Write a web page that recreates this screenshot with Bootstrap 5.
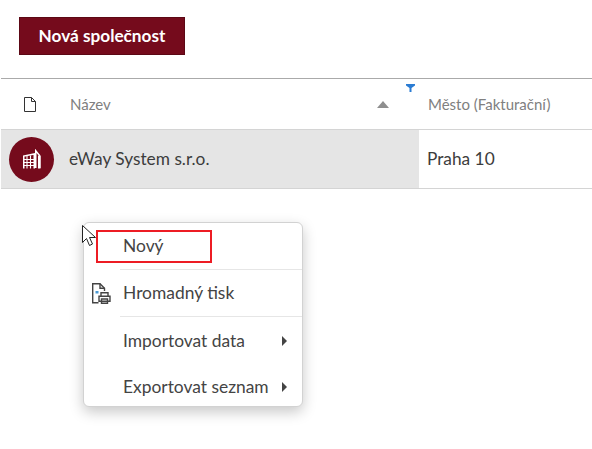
<!DOCTYPE html>
<html lang="cs">
<head>
    <meta charset="UTF-8" />
    <title>Společnosti</title>
    <link href="https://cdn.jsdelivr.net/npm/bootstrap@5.3.6/dist/css/bootstrap.min.css" rel="stylesheet" crossorigin="anonymous" />
    <style>
        body { font-family: "Lato", "Open Sans", sans-serif; background: #fff; color: #333; overflow: hidden; }
        .stranka { position: relative; width: 592px; height: 449px; }
        .horni-lista { padding: 17px 0 23px 19px; }
        .btn-nova { width: 166px; height: 38px; padding: 0; background: #750b1c; border: 1px solid #5c0815; border-radius: 0; color: #fff; font-size: 17.2px; font-weight: 700; }
        .seznam { margin-left: 1px; }
        .hlavicka { height: 52px; border-top: 1px solid #aaa; border-bottom: 1px solid #d4d4d4; color: #808080; font-size: 15px; }
        .bunka-ikona { width: 48px; }
        .hlavicka .bunka-ikona { padding-left: 10px; }
        .bunka-nazev { width: 370px; padding-left: 21px; }
        .bunka-mesto { padding-left: 9px; }
        .radek { height: 59px; border-bottom: 1px solid #d4d4d4; font-size: 17.3px; color: #3c3c3c; }
        .radek .vybrano { background: #e5e5e5; height: 100%; }
        .radek .bunka-nazev { padding-left: 20px; }
        .radek .bunka-mesto { padding-left: 8px; }
        .avatar { width: 45px; height: 45px; margin-left: 8px; background: #750b1c; border-radius: 50%; }
        .sipka-razeni { width: 0; height: 0; margin-right: 30px; border: 6px solid transparent; border-top: 0; border-bottom: 7px solid #8f8f8f; }
        .filtr { position: absolute; left: 406px; top: 84px; }
        .menu-kontext { position: absolute; left: 83px; top: 222px; width: 220px; height: 185px; background: #fff; border: 1px solid #d2d2d2; border-radius: 6px; box-shadow: 0 5px 14px rgba(0,0,0,.22); font-size: 17.4px; color: #444; }
        .polozka { height: 47px; padding-left: 39px; }
        .polozka-oddel { border-bottom: 1px solid #e6e6e6; margin-left: 36px; padding-left: 3px; }
        .polozka-import { height: 48px; }
        .polozka-export { height: 44px; }
        .ikona-tisk { position: absolute; left: 8px; top: 60px; }
        .trojuhelnik { width: 0; height: 0; margin-left: auto; margin-right: 15px; border: 5px solid transparent; border-right: 0; border-left: 5px solid #444; }
        .zvyrazneni { position: absolute; left: 96px; top: 230px; width: 116px; height: 33px; border: 2px solid #ed1c24; }
        .kurzor { position: absolute; left: 81px; top: 224px; }
    </style>
</head>
<body>
<div class="stranka">
    <div class="horni-lista">
        <button type="button" class="btn btn-nova">Nová společnost</button>
    </div>

    <div class="seznam">
        <!-- hlavicka seznamu -->
        <div class="hlavicka d-flex align-items-center">
            <div class="bunka-ikona d-flex justify-content-center">
                <svg width="14" height="15" viewBox="0 0 14 15" fill="none" stroke="#333" stroke-width="1">
                    <path d="M1.500.5h7l4 4v10h-11z" />
                    <path d="M8.500.5v4h4" />
                </svg>
            </div>
            <div class="bunka-nazev d-flex align-items-center justify-content-between">
                <span>Název</span>
                <span class="sipka-razeni"></span>
            </div>
            <div class="bunka-mesto">Město (Fakturační)</div>
        </div>

        <!-- radek se spolecnosti -->
        <div class="radek d-flex align-items-center">
            <div class="vybrano d-flex align-items-center">
                <div class="bunka-ikona">
                    <div class="avatar d-flex align-items-center justify-content-center">
                        <svg width="18" height="20" viewBox="0 0 18 20" fill="none" stroke="#fff">
                            <path d="M.75 19.500V7l10.500-2v14.500" stroke-width="1.500" />
                            <path d="M4 7v12.500M7.500 6.500v13M1 10.500h10M1 13.500h10M1 16.500h10" stroke-width="1.100" />
                            <path d="M12.750 19V1.800l4 5V19" stroke-width="1.500" />
                            <path d="M15 6.500V19.500h2.500V7z" fill="#fff" stroke="none" />
                        </svg>
                    </div>
                </div>
                <div class="bunka-nazev">eWay System s.r.o.</div>
            </div>
            <div class="bunka-mesto">Praha 10</div>
        </div>
    </div>

    <svg class="filtr" width="9" height="8" viewBox="0 0 9 8" fill="#2b7cd3">
        <path d="M0 0h9v1.500L5.500 4v4h-2V4L0 1.500z" />
    </svg>

    <!-- kontextove menu -->
    <div class="menu-kontext">
        <div class="polozka polozka-oddel d-flex align-items-center">Nový</div>
        <div class="polozka polozka-oddel d-flex align-items-center">Hromadný tisk</div>
        <div class="polozka polozka-import d-flex align-items-center">Importovat data<span class="trojuhelnik"></span></div>
        <div class="polozka polozka-export d-flex align-items-center">Exportovat seznam<span class="trojuhelnik"></span></div>
        <svg class="ikona-tisk" width="19" height="21" viewBox="0 0 19 21" fill="none" stroke="#444" stroke-width="1.400">
            <path d="M6.500 19.800H.7V.7h7.300l4.500 4.500v2.800" />
            <path d="M8 .7v4.500h4.500" />
            <path d="M9 9.700h7v3.500H9zM7 13.200h11v5H7zM9.500 16h6v4.300h-6z" fill="#fff" />
            <rect x="3.500" y="8" width="3" height="2.500" fill="#4a9ad4" stroke="none" />
        </svg>
    </div>

    <div class="zvyrazneni"></div>

    <svg class="kurzor" width="16" height="24" viewBox="0 0 16 24" fill="#fff" stroke="#222" stroke-width="1">
        <path d="M1.500 1.500v17l4-4 3 7 3-1.500-3-6.500h6z" />
    </svg>
</div>

<script src="https://cdn.jsdelivr.net/npm/bootstrap@5.3.6/dist/js/bootstrap.bundle.min.js" crossorigin="anonymous"></script>
</body>
</html>
